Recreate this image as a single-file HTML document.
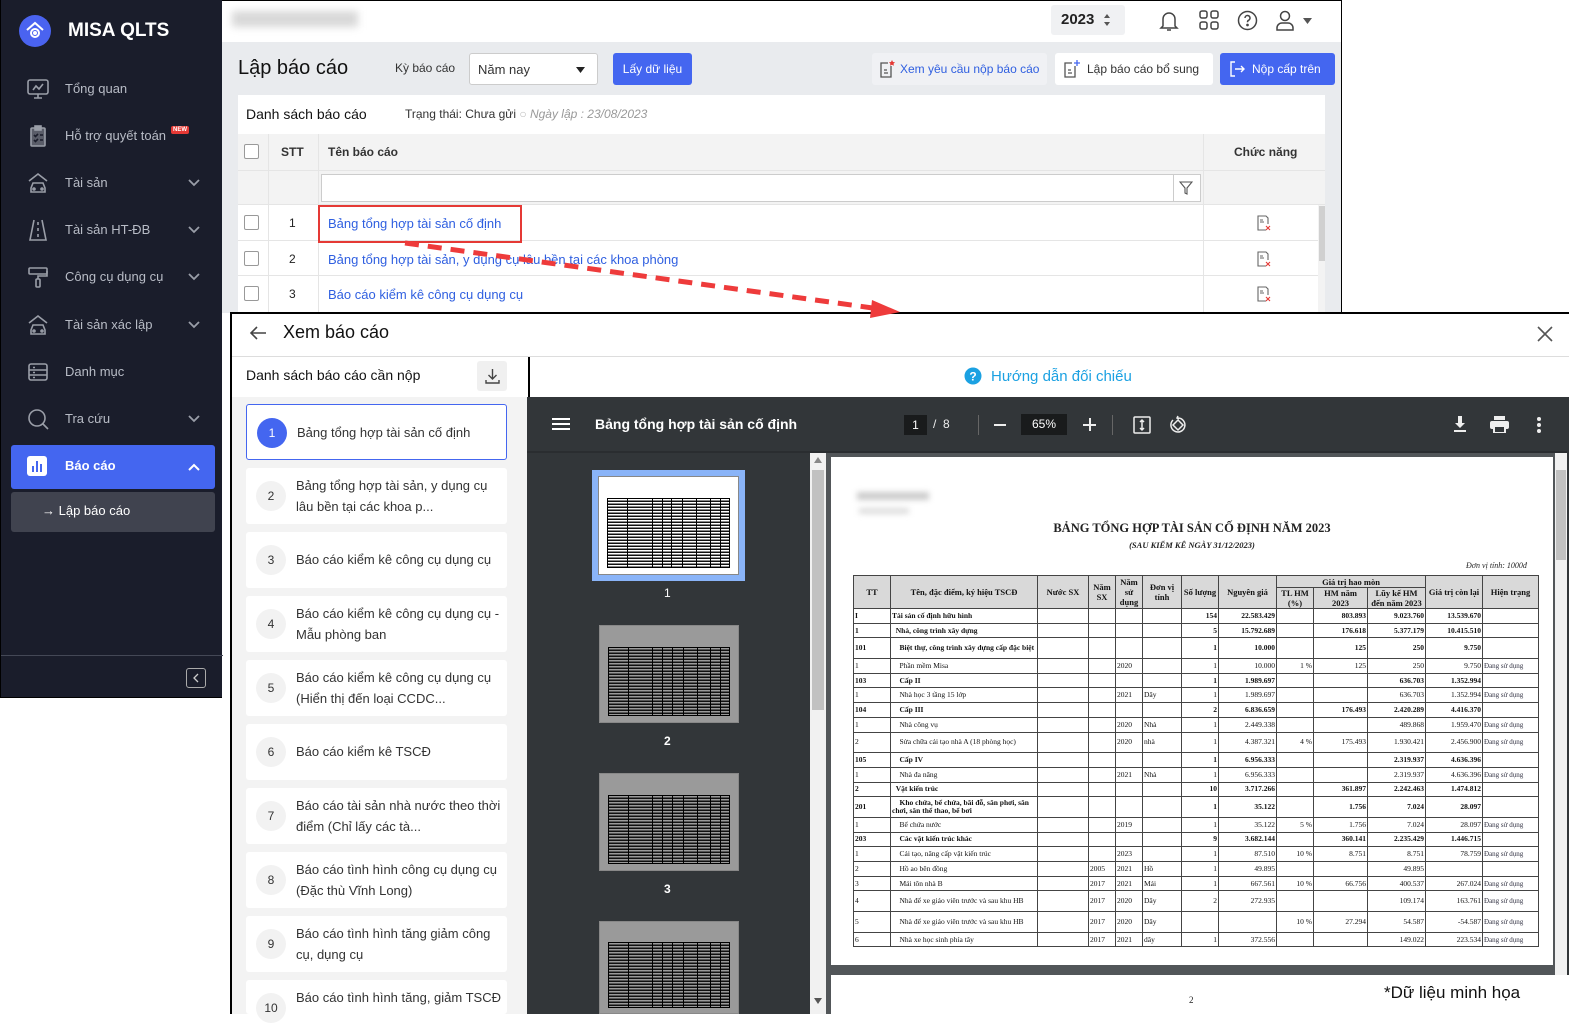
<!DOCTYPE html>
<html><head><meta charset="utf-8">
<style>
*{box-sizing:border-box;margin:0;padding:0}
body{width:1569px;height:1014px;position:relative;overflow:hidden;background:#fff;font-family:"Liberation Sans","Noto Sans CJK SC",sans-serif;color:#222}
.a{position:absolute}
.sb{left:0;top:0;width:222px;height:698px;background:#1a1d2b;border-left:1px solid #000;border-bottom:1px solid #000}
.mi{position:absolute;left:64px;font-size:13px;color:#b8bcc6}
.ic{position:absolute;left:25px;width:24px;height:24px}
.chev{position:absolute;left:186px;width:14px;height:10px}
.btn{position:absolute;height:32px;border-radius:3px;font-size:12px;display:flex;align-items:center;justify-content:center}
.row{position:absolute;left:238px;width:1080px;border-bottom:1px solid #e5e5e5;background:#fff}
.cb{position:absolute;left:6px;width:15px;height:15px;border:1px solid #999;border-radius:2px;background:#fff}
.lnk{color:#2f5fe0;font-size:13px}
.card{position:absolute;left:246px;width:261px;height:56px;background:#fff;border-radius:3px}
.card .n{position:absolute;left:10px;top:13px;width:30px;height:30px;border-radius:50%;background:#f2f2f2;font-size:12px;text-align:center;line-height:30px;color:#333}
.card .t{position:absolute;left:50px;top:7px;width:205px;font-size:13px;line-height:21px;color:#333}
table.r{position:absolute;left:853px;top:575px;width:686px;border-collapse:collapse;table-layout:fixed;font-family:"Liberation Serif",serif;font-size:7.5px;color:#111}
table.r td,table.r th{border:1px solid #444;padding:0 1px;overflow:hidden;white-space:nowrap;height:14.7px;line-height:8px}
table.r th{background:#d9d9d9;font-weight:bold;height:20px;text-align:center;white-space:normal;line-height:10px;font-size:8.5px}
table.r td.nm{white-space:normal}
table.r td.rt{text-align:right}
table.r tr.b td{font-weight:bold}
table.r tr.t td{height:20.7px}
table.r td.h{color:#334;font-size:7px}
.thumb{position:absolute;background:#fff;border:1px solid #888}
.thumb i{position:absolute;left:6%;right:6%;top:22%;bottom:6%;border:1px solid #000;background:repeating-linear-gradient(#fff 0 1.5px,#111 1.5px 3px),#fff}
.thumb b{position:absolute;top:22%;bottom:6%;width:1px;background:#000}
.thumb.g{background:#9a9a9a}
.thumb.g i{background:repeating-linear-gradient(#9a9a9a 0 1.5px,#111 1.5px 3px)}
</style></head><body>

<!-- SIDEBAR -->
<div class="a sb">
  <div class="a" style="left:18px;top:15px;width:32px;height:32px;border-radius:50%;background:#4a63f0"></div>
  <svg class="a" style="left:22px;top:19px" width="24" height="24" viewBox="0 0 24 24" fill="none" stroke="#fff" stroke-width="2"><path d="M4 11 12 4l8 7"/><circle cx="12" cy="14" r="4"/><circle cx="12" cy="14" r="1" fill="#fff"/></svg>
  <div class="a" style="left:67px;top:20px;font-size:19px;font-weight:bold;color:#fff">MISA QLTS</div>

  <svg class="ic" style="top:77px" viewBox="0 0 24 24" fill="none" stroke="#9a9ea8" stroke-width="1.6"><rect x="2" y="3" width="20" height="14" rx="2"/><path d="M7 13l3-4 3 3 4-5M12 17v4M8 21h8"/></svg>
  <div class="mi" style="top:81px">Tổng quan</div>
  <svg class="ic" style="top:124px" viewBox="0 0 24 24" fill="none" stroke="#9a9ea8" stroke-width="1.6"><rect x="5" y="4" width="14" height="18" rx="1" fill="#9a9ea8" fill-opacity=".5"/><rect x="9" y="2" width="6" height="4" fill="#9a9ea8"/><path d="M8 11l1.5 1.5L12 10M8 16l1.5 1.5L12 15M14 11h3M14 16h3" stroke="#1a1d2b"/></svg>
  <div class="mi" style="top:128px">Hỗ trợ quyết toán</div>
  <div class="a" style="left:170px;top:126px;background:#e53935;color:#fff;font-size:6px;font-weight:bold;padding:1px 2px;border-radius:2px">NEW</div>
  <svg class="ic" style="top:171px" viewBox="0 0 24 24" fill="none" stroke="#9a9ea8" stroke-width="1.6"><path d="M3 10 12 3l9 7"/><path d="M5 17l2-5h10l2 5v4H5z"/><circle cx="8" cy="18" r="1"/><circle cx="16" cy="18" r="1"/></svg>
  <div class="mi" style="top:175px">Tài sản</div>
  <svg class="ic" style="top:218px" viewBox="0 0 24 24" fill="none" stroke="#9a9ea8" stroke-width="1.6"><path d="M8 2 4 22h16L16 2M12 4v3M12 10v3M12 16v3"/></svg>
  <div class="mi" style="top:222px">Tài sản HT-ĐB</div>
  <svg class="ic" style="top:265px" viewBox="0 0 24 24" fill="none" stroke="#9a9ea8" stroke-width="1.6"><rect x="3" y="3" width="18" height="6" rx="1"/><path d="M21 6v5H12v3"/><rect x="10" y="14" width="4" height="8" rx="1"/></svg>
  <div class="mi" style="top:269px">Công cụ dụng cụ</div>
  <svg class="ic" style="top:313px" viewBox="0 0 24 24" fill="none" stroke="#9a9ea8" stroke-width="1.6"><path d="M3 10 12 3l9 7"/><path d="M5 17l2-5h10l2 5v4H5z"/><circle cx="8" cy="18" r="1"/><circle cx="16" cy="18" r="1"/></svg>
  <div class="mi" style="top:317px">Tài sản xác lập</div>
  <svg class="ic" style="top:360px" viewBox="0 0 24 24" fill="none" stroke="#9a9ea8" stroke-width="1.6"><rect x="3" y="4" width="18" height="16" rx="2"/><path d="M3 10h18M3 15h18M7 7.5h2M7 12.5h2M7 17.5h2"/></svg>
  <div class="mi" style="top:364px">Danh mục</div>
  <svg class="ic" style="top:407px" viewBox="0 0 24 24" fill="none" stroke="#9a9ea8" stroke-width="1.6"><circle cx="11" cy="11" r="8"/><path d="M17 17l5 5"/></svg>
  <div class="mi" style="top:411px">Tra cứu</div>
  <svg class="chev" style="top:178px" viewBox="0 0 14 10" fill="none" stroke="#9a9ea8" stroke-width="1.8"><path d="M2 2l5 5 5-5"/></svg>
  <svg class="chev" style="top:225px" viewBox="0 0 14 10" fill="none" stroke="#9a9ea8" stroke-width="1.8"><path d="M2 2l5 5 5-5"/></svg>
  <svg class="chev" style="top:272px" viewBox="0 0 14 10" fill="none" stroke="#9a9ea8" stroke-width="1.8"><path d="M2 2l5 5 5-5"/></svg>
  <svg class="chev" style="top:320px" viewBox="0 0 14 10" fill="none" stroke="#9a9ea8" stroke-width="1.8"><path d="M2 2l5 5 5-5"/></svg>
  <svg class="chev" style="top:414px" viewBox="0 0 14 10" fill="none" stroke="#9a9ea8" stroke-width="1.8"><path d="M2 2l5 5 5-5"/></svg>

  <div class="a" style="left:10px;top:445px;width:204px;height:44px;background:#4466f0;border-radius:3px"></div>
  <div class="a" style="left:26px;top:456px;width:20px;height:20px;background:#fff;border-radius:3px"></div>
  <div class="a" style="left:31px;top:466px;width:2px;height:6px;background:#4466f0"></div>
  <div class="a" style="left:35px;top:461px;width:2px;height:11px;background:#4466f0"></div>
  <div class="a" style="left:39px;top:464px;width:2px;height:8px;background:#4466f0"></div>
  <div class="mi" style="top:458px;color:#fff;font-weight:bold">Báo cáo</div>
  <svg class="chev" style="top:462px" viewBox="0 0 14 10" fill="none" stroke="#fff" stroke-width="2"><path d="M2 8l5-5 5 5"/></svg>
  <div class="a" style="left:10px;top:492px;width:204px;height:40px;background:#40434f;border-radius:3px"></div>
  <div class="a" style="left:41px;top:503px;font-size:13px;color:#fff">→ Lập báo cáo</div>
  <div class="a" style="left:0;top:655px;width:222px;height:1px;background:#444856"></div>
  <div class="a" style="left:185px;top:668px;width:20px;height:20px;border:1px solid #aaa;border-radius:3px"></div>
  <svg class="a" style="left:191px;top:673px" width="8" height="10" viewBox="0 0 8 10" fill="none" stroke="#ccc" stroke-width="1.3"><path d="M6 1 2 5l4 4"/></svg>
</div>

<!-- BACK APP -->
<div class="a" style="left:222px;top:0;width:1120px;height:313px;background:#e9ebee;border-right:1px solid #000;border-top:1px solid #000"></div>
<div class="a" style="left:222px;top:1px;width:1119px;height:41px;background:#fff"></div>
<div class="a" style="left:232px;top:11px;width:126px;height:16px;background:#d8d8d8;filter:blur(4px)"></div>
<div class="a" style="left:1051px;top:5px;width:74px;height:30px;background:#f0f1f3;border-radius:3px"></div>
<div class="a" style="left:1061px;top:11px;font-size:15px;font-weight:bold;color:#222">2023</div>
<svg class="a" style="left:1103px;top:13px" width="8" height="14" viewBox="0 0 8 14" fill="#555"><path d="M4 1 7 5H1zM4 13 1 9h6z"/></svg>
<svg class="a" style="left:1159px;top:10px" width="20" height="22" viewBox="0 0 20 22" fill="none" stroke="#444" stroke-width="1.5"><path d="M4 16V9a6 6 0 0 1 12 0v7l2 2H2zM8 20h4"/></svg>
<svg class="a" style="left:1199px;top:10px" width="20" height="20" viewBox="0 0 20 20" fill="none" stroke="#444" stroke-width="1.5"><rect x="1" y="1" width="7" height="7" rx="2"/><rect x="12" y="1" width="7" height="7" rx="2"/><rect x="1" y="12" width="7" height="7" rx="2"/><rect x="12" y="12" width="7" height="7" rx="2"/></svg>
<svg class="a" style="left:1237px;top:10px" width="21" height="21" viewBox="0 0 21 21" fill="none" stroke="#444" stroke-width="1.5"><circle cx="10.5" cy="10.5" r="9"/><path d="M8 8a2.5 2.5 0 1 1 3.5 2.3c-.8.4-1 1-1 2"/><circle cx="10.5" cy="15" r=".6" fill="#444"/></svg>
<svg class="a" style="left:1275px;top:10px" width="20" height="22" viewBox="0 0 20 22" fill="none" stroke="#444" stroke-width="1.5"><circle cx="10" cy="6" r="4.5"/><path d="M2 20v-2a5 5 0 0 1 5-5h6a5 5 0 0 1 5 5v2z"/></svg>
<svg class="a" style="left:1303px;top:18px" width="9" height="6" viewBox="0 0 9 6" fill="#555"><path d="M0 0h9L4.5 6z"/></svg>

<div class="a" style="left:238px;top:57px;font-size:20px;color:#111">Lập báo cáo</div>
<div class="a" style="left:395px;top:61px;font-size:12px;color:#333">Kỳ báo cáo</div>
<div class="a" style="left:469px;top:53px;width:129px;height:32px;background:#fff;border:1px solid #ccc;border-radius:3px"></div>
<div class="a" style="left:478px;top:62px;font-size:13px;color:#333">Năm nay</div>
<svg class="a" style="left:576px;top:67px" width="9" height="6" viewBox="0 0 9 6" fill="#222"><path d="M0 0h9L4.5 6z"/></svg>
<div class="btn" style="left:613px;top:53px;width:79px;background:#4466f0;color:#fff">Lấy dữ liệu</div>
<div class="btn" style="left:872px;top:53px;width:175px;background:#f0f1f4;color:#2f5fe0;justify-content:flex-start;padding-left:28px">Xem yêu cầu nộp báo cáo</div>
<svg class="a" style="left:879px;top:59px" width="16" height="20" viewBox="0 0 16 20" fill="none" stroke="#555" stroke-width="1.3"><path d="M12 7v11H2V4h7"/><path d="M5 11h3M5 14h4"/><path d="M13 1l1 2 2 .3-1.5 1.4.4 2L13 5.8 11 6.7l.4-2L10 3.3 12 3z" fill="#e53935" stroke="none"/></svg>
<div class="btn" style="left:1055px;top:53px;width:158px;background:#fff;color:#333;justify-content:flex-start;padding-left:32px">Lập báo cáo bổ sung</div>
<svg class="a" style="left:1063px;top:59px" width="18" height="20" viewBox="0 0 18 20" fill="none" stroke="#555" stroke-width="1.3"><path d="M12 7v11H2V4h7"/><path d="M5 11h3M5 14h4"/><path d="M14 1v6M11 4h6" stroke="#4466f0"/></svg>
<div class="btn" style="left:1220px;top:53px;width:115px;background:#4466f0;color:#fff;justify-content:flex-start;padding-left:32px">Nộp cấp trên</div>
<svg class="a" style="left:1228px;top:60px" width="18" height="18" viewBox="0 0 18 18" fill="none" stroke="#fff" stroke-width="1.4"><path d="M7 2H3v14h4M7 9h9M13 6l3 3-3 3"/></svg>

<div class="a" style="left:238px;top:95px;width:1087px;height:218px;background:#fff"></div>
<div class="a" style="left:246px;top:106px;font-size:14px;color:#111">Danh sách báo cáo</div>
<div class="a" style="left:405px;top:107px;font-size:12px;color:#333">Trạng thái: Chưa gửi <span style="color:#bbb">○</span> <i style="color:#999">Ngày lập : 23/08/2023</i></div>
<div class="a" style="left:238px;top:134px;width:1087px;height:71px;background:#f3f3f3;border-bottom:1px solid #e5e5e5"></div>
<div class="a" style="left:238px;top:170px;width:1087px;height:1px;background:#e5e5e5"></div>
<div class="cb a" style="left:244px;top:144px"></div>
<div class="a" style="left:281px;top:145px;font-size:12px;font-weight:bold;color:#333">STT</div>
<div class="a" style="left:328px;top:145px;font-size:12px;font-weight:bold;color:#333">Tên báo cáo</div>
<div class="a" style="left:1234px;top:145px;font-size:12px;font-weight:bold;color:#333">Chức năng</div>
<div class="a" style="left:321px;top:174px;width:880px;height:28px;background:#fff;border:1px solid #ccc"></div>
<div class="a" style="left:1173px;top:174px;width:1px;height:28px;background:#ccc"></div>
<svg class="a" style="left:1179px;top:181px" width="14" height="14" viewBox="0 0 14 14" fill="none" stroke="#555" stroke-width="1.1"><path d="M1 1h12L8 7v6L6 12V7z"/></svg>
<div class="row" style="top:205px;height:36px"><div class="cb" style="top:10px"></div><div class="a" style="left:51px;top:11px;font-size:12px">1</div><div class="a lnk" style="left:90px;top:11px">Bảng tổng hợp tài sản cố định</div></div>
<div class="row" style="top:241px;height:35px"><div class="cb" style="top:10px"></div><div class="a" style="left:51px;top:11px;font-size:12px">2</div><div class="a lnk" style="left:90px;top:11px">Bảng tổng hợp tài sản, y dụng cụ lâu bền tại các khoa phòng</div></div>
<div class="row" style="top:276px;height:37px"><div class="cb" style="top:10px"></div><div class="a" style="left:51px;top:11px;font-size:12px">3</div><div class="a lnk" style="left:90px;top:11px">Báo cáo kiểm kê công cụ dụng cụ</div></div>
<div class="a" style="left:268px;top:134px;width:1px;height:179px;background:#e5e5e5"></div>
<div class="a" style="left:318px;top:134px;width:1px;height:179px;background:#e5e5e5"></div>
<div class="a" style="left:1203px;top:134px;width:1px;height:179px;background:#e5e5e5"></div>
<svg class="a" style="left:1256px;top:214px" width="16" height="18" viewBox="0 0 16 18" fill="none" stroke="#666" stroke-width="1.1"><path d="M10 16H2V2h8l2 2v6"/><path d="M4 6h3M4 8h4"/><path d="M10 12l4 4M14 12l-4 4" stroke="#e53935"/></svg>
<svg class="a" style="left:1256px;top:250px" width="16" height="18" viewBox="0 0 16 18" fill="none" stroke="#666" stroke-width="1.1"><path d="M10 16H2V2h8l2 2v6"/><path d="M4 6h3M4 8h4"/><path d="M10 12l4 4M14 12l-4 4" stroke="#e53935"/></svg>
<svg class="a" style="left:1256px;top:285px" width="16" height="18" viewBox="0 0 16 18" fill="none" stroke="#666" stroke-width="1.1"><path d="M10 16H2V2h8l2 2v6"/><path d="M4 6h3M4 8h4"/><path d="M10 12l4 4M14 12l-4 4" stroke="#e53935"/></svg>
<div class="a" style="left:1318px;top:205px;width:7px;height:108px;background:#f3f3f3"></div>
<div class="a" style="left:1319px;top:206px;width:6px;height:55px;background:#d0d0d0"></div>
<div class="a" style="left:318px;top:205px;width:204px;height:38px;border:2px solid #e53935"></div>

<!-- MODAL -->
<div class="a" style="left:230px;top:312px;width:1339px;height:702px;background:#fff;border-top:2px solid #000;border-left:2px solid #000"></div>
<svg class="a" style="left:248px;top:324px" width="20" height="18" viewBox="0 0 20 18" fill="none" stroke="#444" stroke-width="1.6"><path d="M18 9H3M9 3 3 9l6 6"/></svg>
<div class="a" style="left:283px;top:322px;font-size:18px;color:#111">Xem báo cáo</div>
<svg class="a" style="left:1536px;top:325px" width="18" height="18" viewBox="0 0 18 18" fill="none" stroke="#555" stroke-width="1.6"><path d="M2 2l14 14M16 2 2 16"/></svg>
<div class="a" style="left:232px;top:356px;width:1337px;height:1px;background:#ddd"></div>
<div class="a" style="left:232px;top:357px;width:295px;height:657px;background:#f3f3f3"></div>
<div class="a" style="left:232px;top:357px;width:295px;height:40px;background:#fff"></div>
<div class="a" style="left:246px;top:367px;font-size:14px;color:#111">Danh sách báo cáo cần nộp</div>
<div class="a" style="left:477px;top:361px;width:30px;height:30px;background:#f0f0f0;border-radius:3px"></div>
<svg class="a" style="left:485px;top:368px" width="15" height="16" viewBox="0 0 15 16" fill="none" stroke="#444" stroke-width="1.4"><path d="M7.5 1v10M3.5 7l4 4 4-4M1 12v3h13v-3"/></svg>
<div class="a" style="left:528px;top:357px;width:2px;height:40px;background:#000"></div>

<div class="card" style="top:404px;border:1px solid #4466f0"><div class="n" style="background:#4466f0;color:#fff">1</div><div class="t" style="top:17px">Bảng tổng hợp tài sản cố định</div></div>
<div class="card" style="top:468px"><div class="n">2</div><div class="t">Bảng tổng hợp tài sản, y dụng cụ lâu bền tại các khoa p...</div></div>
<div class="card" style="top:532px"><div class="n">3</div><div class="t" style="top:17px">Báo cáo kiểm kê công cụ dụng cụ</div></div>
<div class="card" style="top:596px"><div class="n">4</div><div class="t">Báo cáo kiểm kê công cụ dụng cụ - Mẫu phòng ban</div></div>
<div class="card" style="top:660px"><div class="n">5</div><div class="t">Báo cáo kiểm kê công cụ dụng cụ (Hiển thị đến loại CCDC...</div></div>
<div class="card" style="top:724px"><div class="n">6</div><div class="t" style="top:17px">Báo cáo kiểm kê TSCĐ</div></div>
<div class="card" style="top:788px"><div class="n">7</div><div class="t">Báo cáo tài sản nhà nước theo thời điểm (Chỉ lấy các tà...</div></div>
<div class="card" style="top:852px"><div class="n">8</div><div class="t">Báo cáo tình hình công cụ dụng cụ (Đặc thù Vĩnh Long)</div></div>
<div class="card" style="top:916px"><div class="n">9</div><div class="t">Báo cáo tình hình tăng giảm công cụ, dụng cụ</div></div>
<div class="card" style="top:980px;height:34px"><div class="n">10</div><div class="t">Báo cáo tình hình tăng, giảm TSCĐ</div></div>

<svg class="a" style="left:964px;top:367px" width="18" height="18" viewBox="0 0 18 18"><circle cx="9" cy="9" r="8.5" fill="#1ba1e2"/><text x="9" y="13.5" font-size="12" font-weight="bold" fill="#fff" text-anchor="middle" font-family="Liberation Sans">?</text></svg>
<div class="a" style="left:991px;top:368px;font-size:15px;color:#1ba1e2">Hướng dẫn đối chiếu</div>

<!-- PDF viewer -->
<div class="a" style="left:527px;top:397px;width:1042px;height:617px;background:#323639"></div>
<div class="a" style="left:527px;top:451px;width:1040px;height:2px;background:#2a2d30"></div>
<div class="a" style="left:552px;top:418px;width:18px;height:2px;background:#fff;box-shadow:0 5px 0 #fff,0 10px 0 #fff"></div>
<div class="a" style="left:595px;top:416px;font-size:14px;font-weight:bold;color:#fff">Bảng tổng hợp tài sản cố định</div>
<div class="a" style="left:904px;top:415px;width:23px;height:20px;background:#191b1c;color:#fff;font-size:12px;text-align:center;line-height:20px">1</div>
<div class="a" style="left:933px;top:417px;color:#eee;font-size:12px">/ &nbsp;8</div>
<div class="a" style="left:978px;top:415px;width:1px;height:20px;background:#666"></div>
<div class="a" style="left:994px;top:424px;width:12px;height:2px;background:#eee"></div>
<div class="a" style="left:1021px;top:414px;width:46px;height:21px;background:#191b1c;color:#fff;font-size:12px;text-align:center;line-height:21px">65%</div>
<div class="a" style="left:1083px;top:424px;width:13px;height:2px;background:#eee"></div>
<div class="a" style="left:1088.5px;top:418px;width:2px;height:13px;background:#eee"></div>
<div class="a" style="left:1112px;top:415px;width:1px;height:20px;background:#666"></div>
<svg class="a" style="left:1133px;top:416px" width="18" height="18" viewBox="0 0 18 18" fill="none" stroke="#eee" stroke-width="1.5"><rect x="1" y="1" width="16" height="16" rx="1"/><path d="M9 4v10M7 6l2-2 2 2M7 12l2 2 2-2"/></svg>
<svg class="a" style="left:1169px;top:415px" width="18" height="20" viewBox="0 0 18 20" fill="none" stroke="#eee" stroke-width="1.5"><path d="M9 5l5 5-5 5-5-5z"/><path d="M4 5a7 7 0 1 0 5-2M9 1l-1 2 2 1"/></svg>
<svg class="a" style="left:1452px;top:415px" width="16" height="18" viewBox="0 0 16 18" fill="#eee"><path d="M6 1h4v7h3l-5 5-5-5h3z"/><rect x="2" y="15" width="12" height="2"/></svg>
<svg class="a" style="left:1490px;top:416px" width="19" height="17" viewBox="0 0 19 17" fill="#eee"><rect x="4" y="0" width="11" height="4"/><rect x="0" y="5" width="19" height="8" rx="2"/><rect x="4" y="10" width="11" height="7" fill="#323639" stroke="#eee" stroke-width="2"/></svg>
<div class="a" style="left:1537px;top:417px;width:4px;height:4px;border-radius:50%;background:#eee;box-shadow:0 6px 0 #eee,0 12px 0 #eee"></div>

<!-- thumbnails -->
<div class="a" style="left:810px;top:453px;width:16px;height:561px;background:#f1f1f1"></div>
<div class="a" style="left:812px;top:470px;width:12px;height:240px;background:#c1c1c1"></div>
<svg class="a" style="left:814px;top:457px" width="8" height="6" viewBox="0 0 8 6" fill="#888"><path d="M4 0l4 6H0z"/></svg>
<svg class="a" style="left:814px;top:998px" width="8" height="6" viewBox="0 0 8 6" fill="#555"><path d="M0 0h8L4 6z"/></svg>
<div class="a" style="left:592px;top:470px;width:153px;height:111px;background:#8ab4f8"></div>
<div class="thumb" style="left:598px;top:476px;width:141px;height:99px"><i></i><b style="left:20%"></b><b style="left:38%"></b><b style="left:45%"></b><b style="left:52%"></b><b style="left:60%"></b><b style="left:70%"></b><b style="left:80%"></b><b style="left:87%"></b></div>
<div class="a" style="left:664px;top:586px;color:#fff;font-size:12px">1</div>
<div class="thumb g" style="left:599px;top:625px;width:140px;height:98px"><i></i><b style="left:20%"></b><b style="left:38%"></b><b style="left:45%"></b><b style="left:52%"></b><b style="left:60%"></b><b style="left:70%"></b><b style="left:80%"></b><b style="left:87%"></b></div>
<div class="a" style="left:664px;top:734px;color:#fff;font-size:12px;font-weight:bold">2</div>
<div class="thumb g" style="left:599px;top:773px;width:140px;height:98px"><i></i><b style="left:20%"></b><b style="left:38%"></b><b style="left:45%"></b><b style="left:52%"></b><b style="left:60%"></b><b style="left:70%"></b><b style="left:80%"></b><b style="left:87%"></b></div>
<div class="a" style="left:664px;top:882px;color:#fff;font-size:12px;font-weight:bold">3</div>
<div class="thumb g" style="left:599px;top:921px;width:140px;height:93px"><i></i><b style="left:20%"></b><b style="left:38%"></b><b style="left:45%"></b><b style="left:52%"></b><b style="left:60%"></b><b style="left:70%"></b><b style="left:80%"></b><b style="left:87%"></b></div>

<!-- pages -->
<div class="a" style="left:826px;top:453px;width:741px;height:561px;background:#525659"></div>
<div class="a" style="left:1555px;top:453px;width:12px;height:561px;background:#f1f1f1"></div>
<div class="a" style="left:1556px;top:470px;width:10px;height:90px;background:#c1c1c1"></div>
<div class="a" style="left:831px;top:457px;width:722px;height:508px;background:#fff"></div>
<div class="a" style="left:831px;top:975px;width:722px;height:39px;background:#fff"></div>
<div class="a" style="left:1189px;top:995px;font-family:'Liberation Serif',serif;font-size:9px">2</div>
<div class="a" style="left:857px;top:492px;width:72px;height:8px;background:#ccc;filter:blur(3px)"></div>
<div class="a" style="left:859px;top:508px;width:50px;height:6px;background:#ddd;filter:blur(3px)"></div>
<div class="a" style="left:831px;top:521px;width:722px;text-align:center;font-family:'Liberation Serif',serif;font-weight:bold;font-size:12.5px">BẢNG TỔNG HỢP TÀI SẢN CỐ ĐỊNH NĂM 2023</div>
<div class="a" style="left:831px;top:540px;width:722px;text-align:center;font-family:'Liberation Serif',serif;font-weight:bold;font-style:italic;font-size:8.5px">(SAU KIỂM KÊ NGÀY 31/12/2023)</div>
<div class="a" style="left:1466px;top:561px;font-family:'Liberation Serif',serif;font-style:italic;font-size:8px">Đơn vị tính: 1000đ</div>

<table class="r">
<colgroup><col style="width:37px"><col style="width:147px"><col style="width:51px"><col style="width:27px"><col style="width:27px"><col style="width:39px"><col style="width:37px"><col style="width:58px"><col style="width:37px"><col style="width:54px"><col style="width:58px"><col style="width:57px"><col style="width:56px"></colgroup>
<tr><th rowspan="2">TT</th><th rowspan="2">Tên, đặc điểm, ký hiệu TSCĐ</th><th rowspan="2">Nước SX</th><th rowspan="2">Năm SX</th><th rowspan="2">Năm sử dụng</th><th rowspan="2">Đơn vị tính</th><th rowspan="2">Số lượng</th><th rowspan="2">Nguyên giá</th><th colspan="3" style="height:12px">Giá trị hao mòn</th><th rowspan="2">Giá trị còn lại</th><th rowspan="2">Hiện trạng</th></tr>
<tr><th>TL HM (%)</th><th>HM năm 2023</th><th>Lũy kế HM đến năm 2023</th></tr>
<tr class="b"><td>I</td><td>Tài sản cố định hữu hình</td><td></td><td></td><td></td><td></td><td class="rt">154</td><td class="rt">22.583.429</td><td></td><td class="rt">803.893</td><td class="rt">9.023.760</td><td class="rt">13.539.670</td><td></td></tr>
<tr class="b"><td>1</td><td>&nbsp;&nbsp;Nhà, công trình xây dựng</td><td></td><td></td><td></td><td></td><td class="rt">5</td><td class="rt">15.792.689</td><td></td><td class="rt">176.618</td><td class="rt">5.377.179</td><td class="rt">10.415.510</td><td></td></tr>
<tr class="b t"><td>101</td><td class="nm">&nbsp;&nbsp;&nbsp;&nbsp;Biệt thự, công trình xây dựng cấp đặc biệt</td><td></td><td></td><td></td><td></td><td class="rt">1</td><td class="rt">10.000</td><td></td><td class="rt">125</td><td class="rt">250</td><td class="rt">9.750</td><td></td></tr>
<tr><td>1</td><td>&nbsp;&nbsp;&nbsp;&nbsp;Phần mềm Misa</td><td></td><td></td><td>2020</td><td></td><td class="rt">1</td><td class="rt">10.000</td><td class="rt">1 %</td><td class="rt">125</td><td class="rt">250</td><td class="rt">9.750</td><td class="h">Đang sử dụng</td></tr>
<tr class="b"><td>103</td><td>&nbsp;&nbsp;&nbsp;&nbsp;Cấp II</td><td></td><td></td><td></td><td></td><td class="rt">1</td><td class="rt">1.989.697</td><td></td><td></td><td class="rt">636.703</td><td class="rt">1.352.994</td><td></td></tr>
<tr><td>1</td><td>&nbsp;&nbsp;&nbsp;&nbsp;Nhà học 3 tầng 15 lớp</td><td></td><td></td><td>2021</td><td>Dãy</td><td class="rt">1</td><td class="rt">1.989.697</td><td></td><td></td><td class="rt">636.703</td><td class="rt">1.352.994</td><td class="h">Đang sử dụng</td></tr>
<tr class="b"><td>104</td><td>&nbsp;&nbsp;&nbsp;&nbsp;Cấp III</td><td></td><td></td><td></td><td></td><td class="rt">2</td><td class="rt">6.836.659</td><td></td><td class="rt">176.493</td><td class="rt">2.420.289</td><td class="rt">4.416.370</td><td></td></tr>
<tr><td>1</td><td>&nbsp;&nbsp;&nbsp;&nbsp;Nhà công vụ</td><td></td><td></td><td>2020</td><td>Nhà</td><td class="rt">1</td><td class="rt">2.449.338</td><td></td><td></td><td class="rt">489.868</td><td class="rt">1.959.470</td><td class="h">Đang sử dụng</td></tr>
<tr class="t"><td>2</td><td>&nbsp;&nbsp;&nbsp;&nbsp;Sửa chữa cải tạo nhà A (18 phòng học)</td><td></td><td></td><td>2020</td><td>nhà</td><td class="rt">1</td><td class="rt">4.387.321</td><td class="rt">4 %</td><td class="rt">175.493</td><td class="rt">1.930.421</td><td class="rt">2.456.900</td><td class="h">Đang sử dụng</td></tr>
<tr class="b"><td>105</td><td>&nbsp;&nbsp;&nbsp;&nbsp;Cấp IV</td><td></td><td></td><td></td><td></td><td class="rt">1</td><td class="rt">6.956.333</td><td></td><td></td><td class="rt">2.319.937</td><td class="rt">4.636.396</td><td></td></tr>
<tr><td>1</td><td>&nbsp;&nbsp;&nbsp;&nbsp;Nhà đa năng</td><td></td><td></td><td>2021</td><td>Nhà</td><td class="rt">1</td><td class="rt">6.956.333</td><td></td><td></td><td class="rt">2.319.937</td><td class="rt">4.636.396</td><td class="h">Đang sử dụng</td></tr>
<tr class="b"><td>2</td><td>&nbsp;&nbsp;Vật kiến trúc</td><td></td><td></td><td></td><td></td><td class="rt">10</td><td class="rt">3.717.266</td><td></td><td class="rt">361.897</td><td class="rt">2.242.463</td><td class="rt">1.474.812</td><td></td></tr>
<tr class="b t"><td>201</td><td class="nm">&nbsp;&nbsp;&nbsp;&nbsp;Kho chứa, bể chứa, bãi đỗ, sân phơi, sân chơi, sân thể thao, bể bơi</td><td></td><td></td><td></td><td></td><td class="rt">1</td><td class="rt">35.122</td><td></td><td class="rt">1.756</td><td class="rt">7.024</td><td class="rt">28.097</td><td></td></tr>
<tr><td>1</td><td>&nbsp;&nbsp;&nbsp;&nbsp;Bể chứa nước</td><td></td><td></td><td>2019</td><td></td><td class="rt">1</td><td class="rt">35.122</td><td class="rt">5 %</td><td class="rt">1.756</td><td class="rt">7.024</td><td class="rt">28.097</td><td class="h">Đang sử dụng</td></tr>
<tr class="b"><td>203</td><td>&nbsp;&nbsp;&nbsp;&nbsp;Các vật kiến trúc khác</td><td></td><td></td><td></td><td></td><td class="rt">9</td><td class="rt">3.682.144</td><td></td><td class="rt">360.141</td><td class="rt">2.235.429</td><td class="rt">1.446.715</td><td></td></tr>
<tr><td>1</td><td>&nbsp;&nbsp;&nbsp;&nbsp;Cải tạo, nâng cấp vật kiến trúc</td><td></td><td></td><td>2023</td><td></td><td class="rt">1</td><td class="rt">87.510</td><td class="rt">10 %</td><td class="rt">8.751</td><td class="rt">8.751</td><td class="rt">78.759</td><td class="h">Đang sử dụng</td></tr>
<tr><td>2</td><td>&nbsp;&nbsp;&nbsp;&nbsp;Hồ ao bên đồng</td><td></td><td>2005</td><td>2021</td><td>Hồ</td><td class="rt">1</td><td class="rt">49.895</td><td></td><td></td><td class="rt">49.895</td><td></td><td></td></tr>
<tr><td>3</td><td>&nbsp;&nbsp;&nbsp;&nbsp;Mái tôn nhà B</td><td></td><td>2017</td><td>2021</td><td>Mái</td><td class="rt">1</td><td class="rt">667.561</td><td class="rt">10 %</td><td class="rt">66.756</td><td class="rt">400.537</td><td class="rt">267.024</td><td class="h">Đang sử dụng</td></tr>
<tr class="t"><td>4</td><td class="nm">&nbsp;&nbsp;&nbsp;&nbsp;Nhà để xe giáo viên trước và sau khu HB</td><td></td><td>2017</td><td>2020</td><td>Dãy</td><td class="rt">2</td><td class="rt">272.935</td><td></td><td></td><td class="rt">109.174</td><td class="rt">163.761</td><td class="h">Đang sử dụng</td></tr>
<tr class="t"><td>5</td><td class="nm">&nbsp;&nbsp;&nbsp;&nbsp;Nhà để xe giáo viên trước và sau khu HB</td><td></td><td>2017</td><td>2020</td><td>Dãy</td><td></td><td></td><td class="rt">10 %</td><td class="rt">27.294</td><td class="rt">54.587</td><td class="rt">-54.587</td><td class="h">Đang sử dụng</td></tr>
<tr><td>6</td><td>&nbsp;&nbsp;&nbsp;&nbsp;Nhà xe học sinh phía tây</td><td></td><td>2017</td><td>2021</td><td>dãy</td><td class="rt">1</td><td class="rt">372.556</td><td></td><td></td><td class="rt">149.022</td><td class="rt">223.534</td><td class="h">Đang sử dụng</td></tr>
</table>

<!-- caption -->
<div class="a" style="left:1375px;top:975px;width:194px;height:39px;background:#fff"></div>
<div class="a" style="left:1384px;top:983px;font-size:17px;color:#111">*Dữ liệu minh họa</div>

<!-- dashed arrow -->
<svg class="a" style="left:0;top:0" width="1569" height="1014" viewBox="0 0 1569 1014">
<line x1="405" y1="243" x2="880" y2="309" stroke="#ee3b3b" stroke-width="5" stroke-dasharray="14 9"/>
<path d="M872 300 900 312 870 318z" fill="#ee3b3b"/>
</svg>
</body></html>
